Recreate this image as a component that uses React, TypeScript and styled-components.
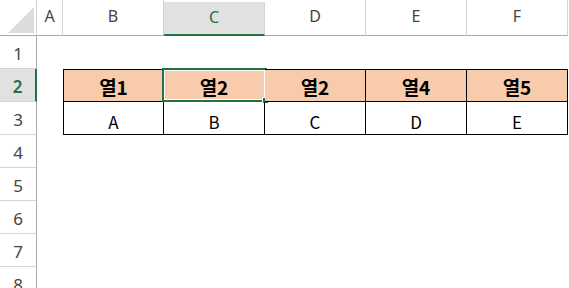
import React from 'react'
import styled, { createGlobalStyle, css } from 'styled-components'

const GlobalStyle = createGlobalStyle`
  html, body {
    margin: 0;
    padding: 0;
    background: #ffffff;
    overflow: hidden;
  }
`

const green = '#217346'

const Sheet = styled.div`
  display: grid;
  grid-template-columns: 37px 26px repeat(5, 101px) 1fr;
  grid-template-rows: 36px repeat(8, 33px);
  width: 569px;
  height: 288px;
  overflow: hidden;
  background: #fff;
`

const Corner = styled.div`
  position: relative;
  border-right: 1px solid #d4d4d4;
  border-bottom: 1px solid #ababab;
  box-sizing: border-box;
`

const CornerTriangle = styled.svg`
  position: absolute;
  left: 8px;
  top: 7px;
`

const ColHead = styled.div<{ $selected?: boolean }>`
  display: flex;
  align-items: center;
  justify-content: center;
  box-sizing: border-box;
  border-right: 1px solid #d4d4d4;
  border-bottom: 1px solid #ababab;
  font-family: 'Noto Sans', 'Open Sans', sans-serif;
  font-size: 16px;
  color: #444;
  padding-bottom: 4px;
  ${({ $selected }) =>
    $selected &&
    css`
      background: #e1e1e1;
      color: ${green};
      border-bottom: 2px solid ${green};
      margin-top: 2px;
      padding-bottom: 3px;
    `}
`

const RowHead = styled.div<{ $selected?: boolean }>`
  display: flex;
  align-items: center;
  justify-content: center;
  box-sizing: border-box;
  border-right: 1px solid #ababab;
  border-bottom: 1px solid #d4d4d4;
  font-family: 'Noto Sans', 'Open Sans', sans-serif;
  font-size: 17px;
  color: #444;
  padding-top: 2px;
  ${({ $selected }) =>
    $selected &&
    css`
      background: #e1e1e1;
      color: ${green};
      font-weight: 600;
      border-right: 2px solid ${green};
    `}
`

const Blank = styled.div``

const Cell = styled.div<{ $head?: boolean; $first?: boolean }>`
  position: relative;
  display: flex;
  align-items: center;
  justify-content: center;
  box-sizing: border-box;
  border-right: 1px solid #000;
  border-bottom: 1px solid #000;
  font-family: 'Noto Sans CJK KR', 'Noto Sans', sans-serif;
  font-size: 17px;
  color: #000;
  ${({ $first }) => $first && 'border-left: 1px solid #000;'}
  ${({ $head }) =>
    $head
      ? css`
          background: #f8cbad;
          border-top: 1px solid #000;
          font-size: 19px;
          font-weight: 700;
          padding-top: 1px;
        `
      : css`
          padding-top: 6px;
        `}
`

const Selection = styled.div`
  position: absolute;
  left: -2px;
  top: -2px;
  right: -3px;
  bottom: -1px;
  border: 2px solid ${green};
  box-shadow: inset 0 0 0 1px #fff;
  pointer-events: none;
`

const FillHandle = styled.div`
  position: absolute;
  right: -4px;
  bottom: -4px;
  width: 5px;
  height: 5px;
  background: ${green};
  border: 1px solid #fff;
`

const columns = ['A', 'B', 'C', 'D', 'E', 'F']
const headers = ['열1', '열2', '열2', '열4', '열5']
const values = ['A', 'B', 'C', 'D', 'E']

export default function App() {
  return (
    <>
      <GlobalStyle />
      <Sheet>
        <Corner>
          <CornerTriangle width="26" height="26" viewBox="0 0 26 26">
            <polygon points="26,0 26,26 0,26" fill="#dcdcdc" />
          </CornerTriangle>
        </Corner>
        {columns.map((c) => (
          <ColHead key={c} $selected={c === 'C'}>
            {c}
          </ColHead>
        ))}
        <Blank />

        {Array.from({ length: 8 }, (_, i) => {
          const row = i + 1
          return (
            <React.Fragment key={row}>
              <RowHead $selected={row === 2}>{row}</RowHead>
              <Blank />
              {row === 2 &&
                headers.map((h, j) => (
                  <Cell key={j} $head $first={j === 0}>
                    {h}
                    {j === 1 && (
                      <Selection>
                        <FillHandle />
                      </Selection>
                    )}
                  </Cell>
                ))}
              {row === 3 &&
                values.map((v, j) => (
                  <Cell key={j} $first={j === 0}>
                    {v}
                  </Cell>
                ))}
              {row !== 2 && row !== 3 && values.map((v) => <Blank key={v} />)}
              <Blank />
            </React.Fragment>
          )
        })}
      </Sheet>
    </>
  )
}
